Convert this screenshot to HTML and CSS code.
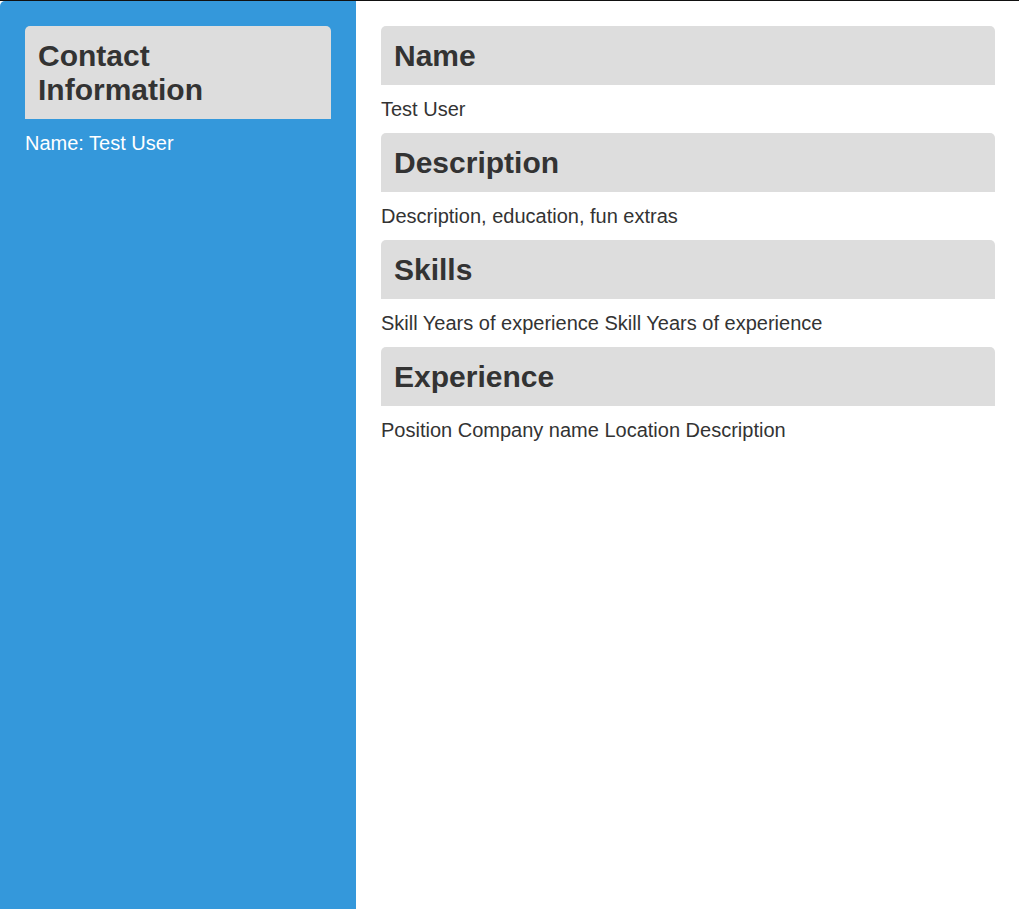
FILE: index.html
```html
<!DOCTYPE html>
<html>
<head>
<meta charset="utf-8">
<link rel="stylesheet" href="styles.css">
</head>
<body>
<div class="page">
  <aside class="sidebar">
    <h2 class="box-title">Contact Information</h2>
    <p class="text">Name: Test User</p>
  </aside>
  <main class="main">
    <section>
      <h2 class="box-title">Name</h2>
      <p class="text">Test User</p>
    </section>
    <section>
      <h2 class="box-title">Description</h2>
      <p class="text">Description, education, fun extras</p>
    </section>
    <section>
      <h2 class="box-title">Skills</h2>
      <p class="text">Skill Years of experience Skill Years of experience</p>
    </section>
    <section>
      <h2 class="box-title">Experience</h2>
      <p class="text">Position Company name Location Description</p>
    </section>
  </main>
</div>
</body>
</html>
```
FILE: styles.css
```css
html {
  border-top: 1px solid #111;
  background: #fff;
}
body {
  margin: 0;
  font-family: "Liberation Sans", Arial, sans-serif;
  color: #333;
}
.page {
  display: grid;
  grid-template-columns: 356px 1fr;
  min-height: 908px;
}
.sidebar {
  background: #3498db;
  padding: 25px;
  color: #fff;
  border-top-left-radius: 5px;
}
.main {
  padding: 25px 24px 25px 25px;
}
.box-title {
  margin: 0;
  padding: 12.5px 12px 12.5px 13px;
  background: #ddd;
  color: #333;
  font-size: 30px;
  line-height: 34px;
  font-weight: bold;
  border-radius: 5px 5px 0 0;
}
.text {
  margin: 12px 0;
  font-size: 20px;
  line-height: 24px;
}
```
